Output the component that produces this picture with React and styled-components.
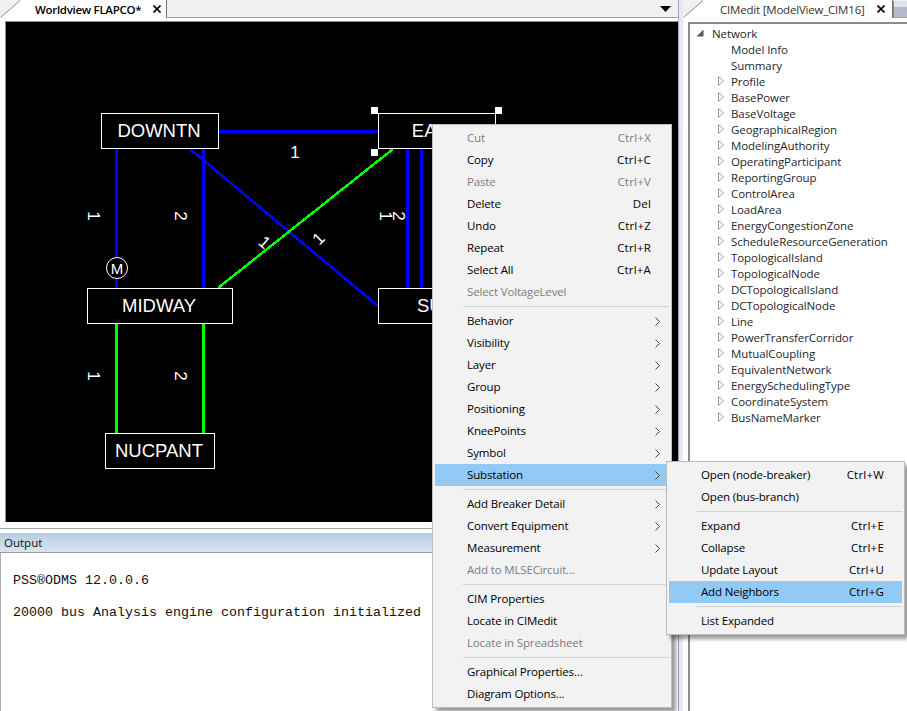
import React from "react";
import styled, { createGlobalStyle } from "styled-components";

const UI_FONT = `"Open Sans", "Noto Sans", sans-serif`;

const mainMenu = [
  { label: "Cut", shortcut: "Ctrl+X", disabled: true },
  { label: "Copy", shortcut: "Ctrl+C" },
  { label: "Paste", shortcut: "Ctrl+V", disabled: true },
  { label: "Delete", shortcut: "Del" },
  { label: "Undo", shortcut: "Ctrl+Z" },
  { label: "Repeat", shortcut: "Ctrl+R" },
  { label: "Select All", shortcut: "Ctrl+A" },
  { label: "Select VoltageLevel", disabled: true },
  { separator: true },
  { label: "Behavior", arrow: true },
  { label: "Visibility", arrow: true },
  { label: "Layer", arrow: true },
  { label: "Group", arrow: true },
  { label: "Positioning", arrow: true },
  { label: "KneePoints", arrow: true },
  { label: "Symbol", arrow: true },
  { label: "Substation", arrow: true, active: true },
  { separator: true },
  { label: "Add Breaker Detail", arrow: true },
  { label: "Convert Equipment", arrow: true },
  { label: "Measurement", arrow: true },
  { label: "Add to MLSECircuit...", disabled: true },
  { separator: true },
  { label: "CIM Properties" },
  { label: "Locate in CIMedit" },
  { label: "Locate in Spreadsheet", disabled: true },
  { separator: true },
  { label: "Graphical Properties..." },
  { label: "Diagram Options..." },
];

const subMenu = [
  { label: "Open (node-breaker)", shortcut: "Ctrl+W" },
  { label: "Open (bus-branch)" },
  { separator: true },
  { label: "Expand", shortcut: "Ctrl+E" },
  { label: "Collapse", shortcut: "Ctrl+E" },
  { label: "Update Layout", shortcut: "Ctrl+U" },
  { label: "Add Neighbors", shortcut: "Ctrl+G", active: true },
  { separator: true },
  { label: "List Expanded" },
];

const treeItems = [
  { label: "Model Info", leaf: true },
  { label: "Summary", leaf: true },
  { label: "Profile" },
  { label: "BasePower" },
  { label: "BaseVoltage" },
  { label: "GeographicalRegion" },
  { label: "ModelingAuthority" },
  { label: "OperatingParticipant" },
  { label: "ReportingGroup" },
  { label: "ControlArea" },
  { label: "LoadArea" },
  { label: "EnergyCongestionZone" },
  { label: "ScheduleResourceGeneration" },
  { label: "TopologicalIsland" },
  { label: "TopologicalNode" },
  { label: "DCTopologicalIsland" },
  { label: "DCTopologicalNode" },
  { label: "Line" },
  { label: "PowerTransferCorridor" },
  { label: "MutualCoupling" },
  { label: "EquivalentNetwork" },
  { label: "EnergySchedulingType" },
  { label: "CoordinateSystem" },
  { label: "BusNameMarker" },
];

// Everything on the diagram is given in page pixels, the canvas origin is taken off below.
const CANVAS_X = 6;
const CANVAS_Y = 22;

const buses = [
  { name: "DOWNTN", x: 101, y: 113, w: 118, h: 36 },
  { name: "EAST", x: 378, y: 113, w: 118, h: 36 },
  { name: "MIDWAY", x: 87, y: 288, w: 146, h: 36 },
  { name: "SUB", x: 378, y: 288, w: 118, h: 36 },
  { name: "NUCPANT", x: 105, y: 433, w: 110, h: 36 },
];

const wires = [
  { x1: 218, y1: 131.5, x2: 378, y2: 131.5, color: "#0000ff", w: 3 },
  { x1: 116.5, y1: 149, x2: 116.5, y2: 288, color: "#0000ff", w: 3 },
  { x1: 203.5, y1: 149, x2: 203.5, y2: 288, color: "#0000ff", w: 3 },
  { x1: 190, y1: 149, x2: 378, y2: 306, color: "#0000ff", w: 2.5 },
  { x1: 218, y1: 288, x2: 393, y2: 149, color: "#00ff00", w: 2.5 },
  { x1: 407.5, y1: 149, x2: 407.5, y2: 288, color: "#0000ff", w: 3 },
  { x1: 421.5, y1: 149, x2: 421.5, y2: 288, color: "#0000ff", w: 3 },
  { x1: 116.5, y1: 324, x2: 116.5, y2: 433, color: "#00ff00", w: 3 },
  { x1: 203.5, y1: 324, x2: 203.5, y2: 433, color: "#00ff00", w: 3 },
];

const circuitLabels = [
  { text: "1", x: 93, y: 216, rot: 90 },
  { text: "2", x: 180, y: 216, rot: 90 },
  { text: "1", x: 295, y: 153, rot: 0 },
  { text: "1", x: 385, y: 216, rot: 90 },
  { text: "2", x: 398, y: 216, rot: 90 },
  { text: "1", x: 264, y: 243, rot: 40 },
  { text: "1", x: 319, y: 239, rot: -45 },
  { text: "1", x: 93, y: 376, rot: 90 },
  { text: "2", x: 180, y: 376, rot: 90 },
];

const handles = [
  { x: 371, y: 107 },
  { x: 495, y: 107 },
  { x: 371, y: 149 },
];

const GlobalStyle = createGlobalStyle`
  html, body {
    margin: 0;
    padding: 0;
    background: #fff;
    overflow: hidden;
  }
`;

const Page = styled.div`
  position: relative;
  width: 907px;
  height: 711px;
  display: flex;
  overflow: hidden;
  background: #fff;
  font-family: ${UI_FONT};
  font-size: 11.5px;
  color: #111;
`;

const LeftColumn = styled.div`
  width: 678px;
  display: flex;
  flex-direction: column;
`;

const Sash = styled.div`
  width: 4px;
  background: #e6e8f6;
  border-left: 1px solid #a8a8a8;
`;

const RightColumn = styled.div`
  flex: 1;
  display: flex;
  flex-direction: column;
  min-width: 0;
`;

const TabStrip = styled.div`
  position: relative;
  height: 18px;
  flex: none;
  display: flex;
  align-items: stretch;
  background: #f0f0f0;
  box-sizing: border-box;
  border-bottom: 1px solid #a0a0a0;
`;

const Tab = styled.div`
  position: relative;
  width: ${(p) => p.$width}px;
  height: 18px;
  flex: none;
  box-sizing: border-box;
  display: flex;
  align-items: center;
  padding-left: ${(p) => p.$pad}px;
  background: #fff;
  border-right: 1px solid #707070;
`;

const TabTitle = styled.span`
  font-weight: ${(p) => (p.$strong ? 600 : 400)};
  color: ${(p) => (p.$strong ? "#000" : "#333")};
  letter-spacing: ${(p) => (p.$strong ? -0.3 : -0.2)}px;
  white-space: nowrap;
  line-height: 17px;
`;

const TabCorner = styled.svg`
  position: absolute;
  left: 0;
  top: 0;
`;

const CloseIcon = styled.svg`
  position: absolute;
  right: ${(p) => p.$right}px;
  top: 5px;
`;

const DropArrow = styled.svg`
  position: absolute;
  right: 7px;
  top: 6px;
`;

const InactiveTab = styled.div`
  flex: 1;
  margin-top: 1px;
  background: linear-gradient(#dfe1ea 0%, #dfe1ea 35%, #b4b7cc 40%, #b8bbd0 100%);
  border-left: 1px solid #8a8a8a;
`;

const DiagramFrame = styled.div`
  flex: none;
  height: 511px;
  box-sizing: border-box;
  padding: 3px 0 6px 5px;
  display: flex;
  border-bottom: 1px solid #a8a8a8;
`;

const Canvas = styled.div`
  position: relative;
  flex: 1;
  background: #000;
  border-top: 1px solid #8c8c8c;
  border-left: 1px solid #8c8c8c;
  font-family: "Liberation Sans", Arial, sans-serif;
  color: #fff;
  overflow: hidden;
`;

const WireLayer = styled.svg`
  position: absolute;
  left: 0;
  top: 0;
`;

const BusNode = styled.div`
  position: absolute;
  left: ${(p) => p.$x - CANVAS_X}px;
  top: ${(p) => p.$y - CANVAS_Y}px;
  width: ${(p) => p.$w}px;
  height: ${(p) => p.$h}px;
  box-sizing: border-box;
  border: 1px solid #fff;
  padding-right: 2px;
  background: #000;
  display: flex;
  align-items: center;
  justify-content: center;
  font-size: 18.5px;
`;

const CircuitLabel = styled.span`
  position: absolute;
  left: ${(p) => p.$x - CANVAS_X - 10}px;
  top: ${(p) => p.$y - CANVAS_Y - 10}px;
  width: 20px;
  height: 20px;
  line-height: 20px;
  text-align: center;
  font-size: 17px;
  transform: rotate(${(p) => p.$rot}deg);
`;

const MotorSymbol = styled.div`
  position: absolute;
  left: ${106 - CANVAS_X}px;
  top: ${257 - CANVAS_Y}px;
  width: 22px;
  height: 22px;
  box-sizing: border-box;
  border: 1px solid #fff;
  border-radius: 50%;
  background: #000;
  display: flex;
  align-items: center;
  justify-content: center;
  font-size: 15px;
`;

const SelectionHandle = styled.div`
  position: absolute;
  left: ${(p) => p.$x - CANVAS_X}px;
  top: ${(p) => p.$y - CANVAS_Y}px;
  width: 7px;
  height: 7px;
  background: #fff;
`;

const OutputPanel = styled.div`
  flex: 1;
  display: flex;
  flex-direction: column;
  min-height: 0;
`;

const OutputHeader = styled.div`
  margin-top: 4px;
  height: 20px;
  flex: none;
  box-sizing: border-box;
  display: flex;
  align-items: center;
  padding-left: 4px;
  background: linear-gradient(#b9cde0, #d8e5f2);
  border-bottom: 1px solid #9a9a9a;
`;

const OutputBody = styled.pre`
  flex: 1;
  margin: 0;
  padding: 20px 0 0 12px;
  border-left: 1px solid #b0b0b0;
  font-family: "Liberation Mono", "Courier New", monospace;
  font-size: 13.33px;
  line-height: 16px;
  color: #111;
`;

const TreeFrame = styled.div`
  flex: 1;
  margin: 4px 0 0 5px;
  padding: 1px 0 0 0;
  border-top: 2px solid #8c8c8c;
  border-left: 2px solid #8c8c8c;
  min-height: 0;
  letter-spacing: -0.08px;
`;

const TreeRow = styled.div`
  height: 16px;
  display: flex;
  align-items: center;
  padding-left: ${(p) => (p.$root ? 6 : 25)}px;
  color: #1f1f2a;
  white-space: nowrap;
`;

const Expander = styled.span`
  width: 16px;
  flex: none;
  display: flex;
  align-items: center;
  padding-left: ${(p) => (p.$root ? 0 : 3)}px;
  box-sizing: border-box;
`;

const Menu = styled.div`
  position: absolute;
  left: ${(p) => p.$x}px;
  top: ${(p) => p.$y}px;
  width: ${(p) => p.$w}px;
  box-sizing: border-box;
  padding: 2px;
  background: #f2f2f2;
  border: 1px solid #bcbcbc;
  box-shadow: 4px 4px 4px rgba(0, 0, 0, 0.4);
`;

const MenuRow = styled.div`
  height: 22px;
  box-sizing: border-box;
  display: flex;
  align-items: center;
  padding: 0 18px 2px ${(p) => p.$pad}px;
  background: ${(p) => (p.$active ? "#91c9f7" : "transparent")};
  color: ${(p) => (p.$disabled ? "#7d7d7d" : "#000")};
  white-space: nowrap;
`;

const MenuLabel = styled.span`
  flex: 1;
  letter-spacing: -0.15px;
`;

const MenuShortcut = styled.span`
  margin-left: 16px;
  letter-spacing: 0.2px;
`;

const MenuArrow = styled.svg`
  position: relative;
  left: 9px;
  top: 1px;
`;

const MenuSeparator = styled.div`
  height: 1px;
  margin: 3px 0 3px 28px;
  background: #d2d2d2;
`;

const Triangle = ({ open }) =>
  open ? (
    <svg width="8" height="8" viewBox="0 0 8 8">
      <path d="M7.5 0.5V7.5H0.5Z" fill="#595959" />
    </svg>
  ) : (
    <svg width="6" height="10" viewBox="0 0 6 10">
      <path d="M0.5 0.5L5.5 5L0.5 9.5Z" fill="#fff" stroke="#9a9a9a" />
    </svg>
  );

const Close = ({ right }) => (
  <CloseIcon $right={right} width="8" height="8" viewBox="0 0 8 8">
    <path d="M0.5 0.5L7.5 7.5M7.5 0.5L0.5 7.5" stroke="#000" strokeWidth="1.6" />
  </CloseIcon>
);

const Corner = () => (
  <TabCorner width="21" height="18" viewBox="0 0 21 18">
    <path d="M0 0H20L0 17.5Z" fill="#f0f0f0" />
    <path d="M0.5 17.5L20 0.5" stroke="#8a8a8a" fill="none" />
  </TabCorner>
);

const MenuList = ({ items, x, y, w, pad }) => (
  <Menu $x={x} $y={y} $w={w}>
    {items.map((item, i) =>
      item.separator ? (
        <MenuSeparator key={i} />
      ) : (
        <MenuRow key={i} $pad={pad} $active={item.active} $disabled={item.disabled}>
          <MenuLabel>{item.label}</MenuLabel>
          {item.shortcut && <MenuShortcut>{item.shortcut}</MenuShortcut>}
          {item.arrow && (
            <MenuArrow width="5" height="9" viewBox="0 0 5 9">
              <path d="M0.5 0.5L4.5 4.5L0.5 8.5" stroke="#444" fill="none" />
            </MenuArrow>
          )}
        </MenuRow>
      )
    )}
  </Menu>
);

export default function App() {
  return (
    <Page>
      <GlobalStyle />
      <LeftColumn>
        <TabStrip>
          <Tab $width={167} $pad={35}>
            <Corner />
            <TabTitle $strong>Worldview FLAPCO*</TabTitle>
            <Close right={5} />
          </Tab>
          <DropArrow width="11" height="6" viewBox="0 0 11 6">
            <path d="M0 0H11L5.5 6Z" fill="#000" />
          </DropArrow>
        </TabStrip>
        <DiagramFrame>
          <Canvas>
            <WireLayer width="671" height="500" viewBox={`${CANVAS_X} ${CANVAS_Y} 671 500`}>
              {wires.map((l, i) => (
                <line
                  key={i}
                  x1={l.x1}
                  y1={l.y1}
                  x2={l.x2}
                  y2={l.y2}
                  stroke={l.color}
                  strokeWidth={l.w}
                  shapeRendering="crispEdges"
                />
              ))}
            </WireLayer>
            {buses.map((b) => (
              <BusNode key={b.name} $x={b.x} $y={b.y} $w={b.w} $h={b.h}>
                {b.name}
              </BusNode>
            ))}
            {circuitLabels.map((c, i) => (
              <CircuitLabel key={i} $x={c.x} $y={c.y} $rot={c.rot}>
                {c.text}
              </CircuitLabel>
            ))}
            <MotorSymbol>M</MotorSymbol>
            {handles.map((h, i) => (
              <SelectionHandle key={i} $x={h.x} $y={h.y} />
            ))}
          </Canvas>
        </DiagramFrame>
        <OutputPanel>
          <OutputHeader>Output</OutputHeader>
          <OutputBody>
            {"PSS®ODMS 12.0.0.6\n\n20000 bus Analysis engine configuration initialized"}
          </OutputBody>
        </OutputPanel>
      </LeftColumn>
      <Sash />
      <RightColumn>
        <TabStrip>
          <Tab $width={210} $pad={37}>
            <Corner />
            <TabTitle>CIMedit [ModelView_CIM16]</TabTitle>
            <Close right={7} />
          </Tab>
          <InactiveTab />
        </TabStrip>
        <TreeFrame>
          <TreeRow $root>
            <Expander $root>
              <Triangle open />
            </Expander>
            Network
          </TreeRow>
          {treeItems.map((t) => (
            <TreeRow key={t.label}>
              <Expander>{!t.leaf && <Triangle />}</Expander>
              {t.label}
            </TreeRow>
          ))}
        </TreeFrame>
      </RightColumn>
      <MenuList items={mainMenu} x={432} y={124} w={240} pad={32} />
      <MenuList items={subMenu} x={666} y={461} w={239} pad={32} />
    </Page>
  );
}
